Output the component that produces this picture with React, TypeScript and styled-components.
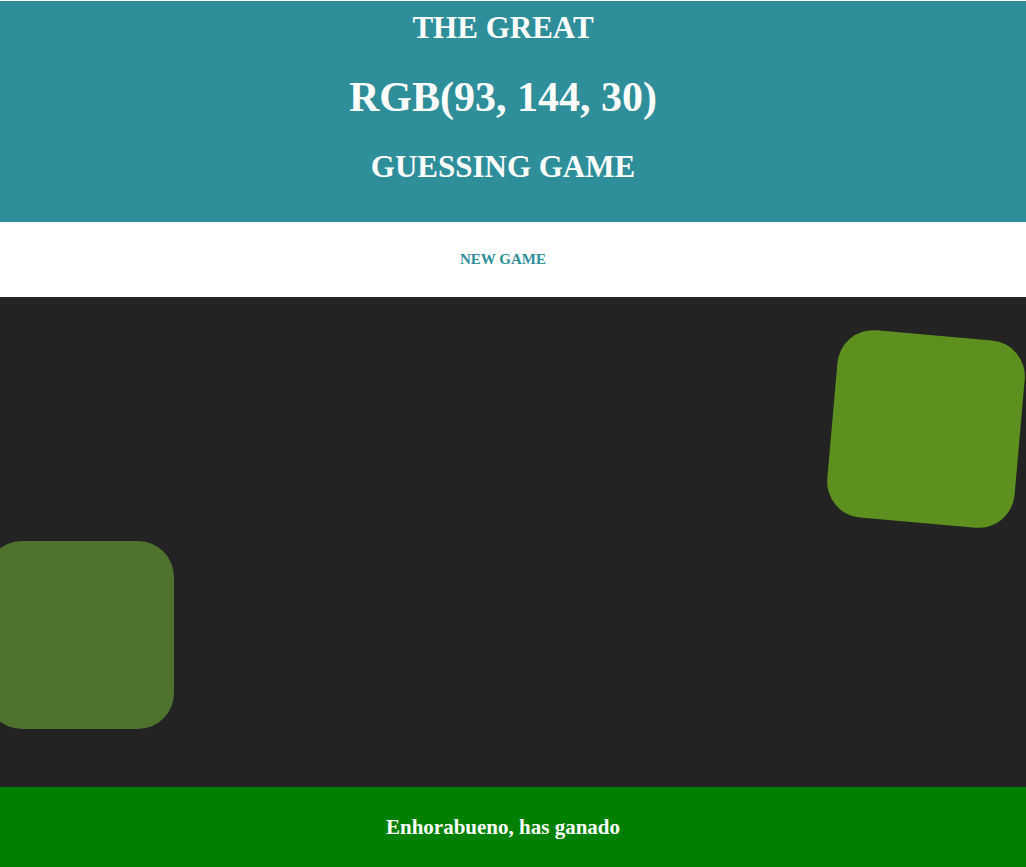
import React from "react";
import styled, { createGlobalStyle } from "styled-components";

const GlobalStyle = createGlobalStyle`
  html, body {
    margin: 0;
    padding: 0;
    background: #ffffff;
  }
  body {
    font-family: "Liberation Serif", "Times New Roman", serif;
    overflow: hidden;
  }
`;

const Page = styled.div`
  display: flex;
  flex-direction: column;
  width: 1026px;
  height: 867px;
  padding-top: 1px;
  box-sizing: border-box;
`;

const Header = styled.header`
  display: flex;
  flex-direction: column;
  align-items: center;
  gap: 33px;
  height: 221px;
  box-sizing: border-box;
  padding: 11px 20px 0 0;
  background: #2e8e9a;
  color: #ffffff;
`;

const Title = styled.h1<{ $size: number }>`
  margin: 0;
  font-size: ${(p) => p.$size}px;
  line-height: 1;
  font-weight: bold;
  text-transform: uppercase;
`;

const Controls = styled.nav`
  display: flex;
  justify-content: center;
  align-items: center;
  height: 75px;
  padding-right: 20px;
  background: #ffffff;
`;

const NewGameButton = styled.button`
  border: none;
  background: transparent;
  padding: 0;
  font-family: "Liberation Serif", "Times New Roman", serif;
  font-weight: bold;
  font-size: 15px;
  line-height: 1;
  color: #2e8e9a;
  text-transform: uppercase;
  cursor: pointer;
`;

const Playground = styled.main`
  position: relative;
  height: 490px;
  background: #232323;
  overflow: hidden;
`;

const Tile = styled.div<{ $color: string }>`
  position: absolute;
  width: 188px;
  height: 188px;
  border-radius: 36px;
  background: ${(p) => p.$color};
`;

const Footer = styled.footer`
  display: flex;
  justify-content: center;
  align-items: center;
  height: 80px;
  padding-right: 20px;
  background: #008000;
  color: #ffffff;
`;

const Message = styled.p`
  margin: 0;
  font-size: 21px;
  line-height: 1;
  font-weight: bold;
`;

const tiles = [
  { color: "#5d901e", left: 832, top: 37.5, rotate: 5 },
  { color: "#4f722e", left: -14, top: 244, rotate: 0 },
];

export default function App() {
  return (
    <>
      <GlobalStyle />
      <Page>
        <Header>
          <Title $size={31}>The Great</Title>
          <Title $size={42}>RGB(93, 144, 30)</Title>
          <Title $size={31}>Guessing Game</Title>
        </Header>
        <Controls>
          <NewGameButton>New Game</NewGameButton>
        </Controls>
        <Playground>
          {tiles.map((t, i) => (
            <Tile
              key={i}
              $color={t.color}
              style={{ left: t.left, top: t.top, transform: `rotate(${t.rotate}deg)` }}
            />
          ))}
        </Playground>
        <Footer>
          <Message>Enhorabueno, has ganado</Message>
        </Footer>
      </Page>
    </>
  );
}
